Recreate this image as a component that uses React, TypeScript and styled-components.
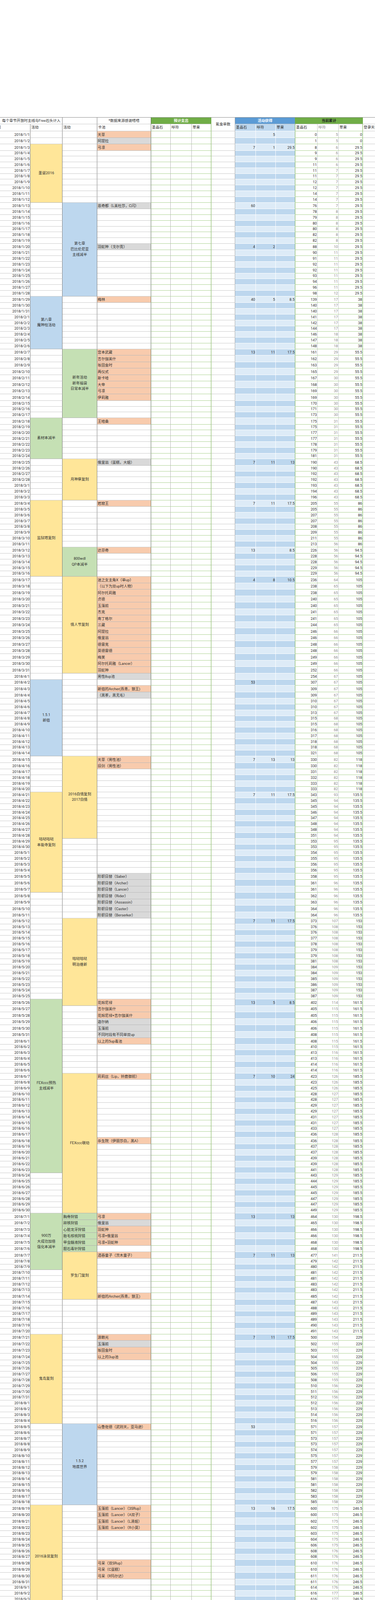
import React from 'react';
import styled, { createGlobalStyle } from 'styled-components';

type Triple = [number, number, number];
type Tone = 'yellow' | 'blue' | 'steel' | 'green' | 'lime' | 'orange';
type PoolTone = 'o' | 'g' | 'b' | 'v';

const TONE: Record<Tone, string> = {
  yellow: '#ffe699',
  blue: '#bdd7ee',
  steel: '#b4c7e7',
  green: '#c5e0b4',
  lime: '#a9d18e',
  orange: '#f4b183',
};

const POOL_TONE: Record<PoolTone, string> = {
  o: '#f8cbad',
  g: '#d9d9d9',
  b: '#9dc3e6',
  v: '#c5e0b4',
};

// visible widths: column A is partly scrolled off the left edge
const COLS = [97, 82, 89, 138, 50, 54, 50, 61, 53, 51, 50, 57, 54, 62, 70];

interface Block {
  from: string;
  to: string;
  label: string;
  tone: Tone;
  left?: boolean;
}

const EVENTS_A: Block[] = [
  { from: '2018/1/3', to: '2018/1/12', label: '圣诞2016', tone: 'yellow' },
  { from: '2018/1/29', to: '2018/2/6', label: '第八章\n魔神柱活动', tone: 'blue' },
  { from: '2018/2/18', to: '2018/2/24', label: '素材本减半', tone: 'green' },
  { from: '2018/3/4', to: '2018/3/16', label: '监狱塔复刻', tone: 'yellow' },
  { from: '2018/4/2', to: '2018/4/14', label: '1.5.1\n新宿', tone: 'blue' },
  { from: '2018/4/21', to: '2018/5/7', label: '咕哒咕哒\n本能寺复刻', tone: 'yellow' },
  { from: '2018/5/26', to: '2018/6/23', label: 'FEXccc预热\n主线减半', tone: 'green' },
  { from: '2018/7/1', to: '2018/7/9', label: '900万\n大成功加倍\n强化本减半', tone: 'green' },
  { from: '2018/7/21', to: '2018/8/4', label: '鬼岛复刻', tone: 'yellow' },
  { from: '2018/8/19', to: '2018/9/4', label: '2016泳装复刻', tone: 'yellow' },
  { from: '2018/9/16', to: '2018/10/8', label: '泳装2017', tone: 'yellow' },
  { from: '2018/10/13', to: '2018/10/27', label: '尼禄祭2017\n无限池', tone: 'orange' },
  { from: '2018/11/3', to: '2018/11/17', label: '万圣2016复刻', tone: 'yellow' },
  { from: '2018/12/1', to: '2018/12/15', label: '万圣2017', tone: 'yellow' },
  { from: '2018/12/29', to: '2019/1/5', label: '1100万DL\n主线1/4', tone: 'green' },
  { from: '2019/1/21', to: '2019/1/31', label: '圣诞2017\n无限池', tone: 'orange' },
  { from: '2019/2/7', to: '2019/2/14', label: '新年活动\n种火本减半', tone: 'lime' },
];

const EVENTS_C: Block[] = [
  { from: '2018/1/13', to: '2018/1/28', label: '第七章\n巴比伦尼亚\n主线减半', tone: 'blue' },
  { from: '2018/2/7', to: '2018/2/17', label: '新年活动\n新年福袋\n日常本减半', tone: 'green' },
  { from: '2018/2/25', to: '2018/3/3', label: '月神祭复刻', tone: 'yellow' },
  { from: '2018/3/12', to: '2018/3/16', label: '800wdl\nQP本减半', tone: 'green' },
  { from: '2018/3/17', to: '2018/3/31', label: '情人节复刻', tone: 'yellow' },
  { from: '2018/4/15', to: '2018/4/28', label: '2016白情复刻\n2017白情', tone: 'yellow' },
  { from: '2018/5/12', to: '2018/5/26', label: '咕哒咕哒\n明治维新', tone: 'yellow' },
  { from: '2018/6/7', to: '2018/6/30', label: 'FEXccc联动', tone: 'yellow' },
  { from: '2018/7/1', to: '2018/7/1', label: '胸骨狩猎', tone: 'green', left: true },
  { from: '2018/7/2', to: '2018/7/2', label: '蹄铁狩猎', tone: 'green', left: true },
  { from: '2018/7/3', to: '2018/7/3', label: '心脏龙牙狩猎', tone: 'green', left: true },
  { from: '2018/7/4', to: '2018/7/4', label: '胎毛核桃狩猎', tone: 'green', left: true },
  { from: '2018/7/5', to: '2018/7/5', label: '甲虫髓液狩猎', tone: 'green', left: true },
  { from: '2018/7/6', to: '2018/7/6', label: '胆石毒针狩猎', tone: 'green', left: true },
  { from: '2018/7/7', to: '2018/7/14', label: '罗生门复刻', tone: 'yellow' },
  { from: '2018/8/5', to: '2018/8/18', label: '1.5.2\n地底世界', tone: 'blue' },
  { from: '2018/9/5', to: '2018/9/15', label: '二周年\n周年福袋\n全日常副本减半', tone: 'green' },
  { from: '2018/10/6', to: '2018/10/13', label: 'Free减半', tone: 'green' },
  { from: '2018/10/27', to: '2018/11/10', label: '1000万DL\n42选1', tone: 'green' },
  { from: '2018/11/20', to: '2018/12/8', label: '1.5.3\n英灵剑豪', tone: 'steel' },
  { from: '2018/12/22', to: '2018/12/31', label: '圣诞2016复刻\n有限池10池', tone: 'orange' },
  { from: '2019/1/4', to: '2019/1/18', label: '1.5.4\n塞勒姆', tone: 'steel' },
  { from: '2019/2/1', to: '2019/2/6', label: 'FGO2.0', tone: 'blue' },
];

const POOLS: Record<string, [string, PoolTone]> = {
  '2018/1/1': ['天草', 'o'],
  '2018/1/2': ['阿提拉', 'g'],
  '2018/1/3': ['弓凛', 'o'],
  '2018/1/13': ['恩奇都（L美杜莎，C闪）', 'g'],
  '2018/1/20': ['羽蛇神（戈尔贡）', 'g'],
  '2018/1/29': ['梅林', 'o'],
  '2018/2/7': ['宫本武藏', 'o'],
  '2018/2/8': ['吉尔伽美什', 'o'],
  '2018/2/9': ['坂田金时', 'o'],
  '2018/2/10': ['两仪式', 'o'],
  '2018/2/11': ['斯卡哈', 'o'],
  '2018/2/12': ['大帝', 'o'],
  '2018/2/13': ['弓凛', 'o'],
  '2018/2/14': ['伊莉雅', 'o'],
  '2018/2/18': ['王哈桑', 'o'],
  '2018/2/25': ['俄里翁（蛋糕，大姐）', 'g'],
  '2018/3/4': ['岩窟王', 'o'],
  '2018/3/12': ['达芬奇', 'o'],
  '2018/3/17': ['迷之女主角X（单up）', 'o'],
  '2018/3/18': ['（以下为双up时人物）', 'o'],
  '2018/3/19': ['阿尔托莉雅', 'o'],
  '2018/3/20': ['贞德', 'o'],
  '2018/3/21': ['玉藻前', 'o'],
  '2018/3/22': ['杰克', 'o'],
  '2018/3/23': ['南丁格尔', 'o'],
  '2018/3/24': ['三藏', 'o'],
  '2018/3/25': ['阿提拉', 'o'],
  '2018/3/26': ['俄里翁', 'o'],
  '2018/3/27': ['德雷克', 'o'],
  '2018/3/28': ['莫德雷德', 'o'],
  '2018/3/29': ['梅芙', 'o'],
  '2018/3/30': ['阿尔托莉雅（Lancer）', 'o'],
  '2018/3/31': ['羽蛇神', 'o'],
  '2018/4/1': ['男性8up池', 'g'],
  '2018/4/3': ['新宿的Archer(燕青，狼王)', 'o'],
  '2018/4/4': ['（黑茶，黑无毛）', 'g'],
  '2018/4/15': ['天草（男性池）', 'o'],
  '2018/4/16': ['旧剑（男性池）', 'o'],
  '2018/5/5': ['阶职日替（Saber）', 'g'],
  '2018/5/6': ['阶职日替（Archer）', 'g'],
  '2018/5/7': ['阶职日替（Lancer）', 'g'],
  '2018/5/8': ['阶职日替（Rider）', 'g'],
  '2018/5/9': ['阶职日替（Assassin）', 'g'],
  '2018/5/10': ['阶职日替（Caster）', 'g'],
  '2018/5/11': ['阶职日替（Berserker）', 'g'],
  '2018/5/26': ['花嫁尼禄', 'o'],
  '2018/5/27': ['吉尔伽美什', 'o'],
  '2018/5/28': ['花嫁尼禄+吉尔伽美什', 'o'],
  '2018/5/29': ['迦尔纳', 'g'],
  '2018/5/30': ['玉藻前', 'g'],
  '2018/5/31': ['不同时段有不同单双up', 'g'],
  '2018/6/1': ['以上的5up毒池', 'o'],
  '2018/6/7': ['莉莉丝（Lip，铃鹿御前）', 'o'],
  '2018/6/18': ['杀生院（伊丽莎白，黑A）', 'o'],
  '2018/7/1': ['弓凛', 'o'],
  '2018/7/2': ['俄里翁', 'g'],
  '2018/7/3': ['羽蛇神', 'o'],
  '2018/7/4': ['弓凛+俄里翁', 'o'],
  '2018/7/5': ['弓凛+羽蛇神', 'o'],
  '2018/7/7': ['酒吞童子（茨木童子）', 'o'],
  '2018/7/14': ['新宿的Archer(燕青，狼王)', 'o'],
  '2018/7/21': ['源赖光', 'o'],
  '2018/7/22': ['玉藻前', 'g'],
  '2018/7/23': ['坂田金时', 'o'],
  '2018/7/24': ['以上的3up池', 'o'],
  '2018/8/5': ['山鲁佐德（武则天，亚马逊）', 'o'],
  '2018/8/19': ['玉藻前（Lancer）（3SRup）', 'o'],
  '2018/8/20': ['玉藻前（Lancer）（A双子）', 'o'],
  '2018/8/21': ['玉藻前（Lancer）（L清姬）', 'o'],
  '2018/8/22': ['玉藻前（Lancer）（R小莫）', 'o'],
  '2018/8/28': ['弓呆（双SRup）', 'o'],
  '2018/8/29': ['弓呆（C蛋糕）', 'o'],
  '2018/8/30': ['弓呆（R玛尔达）', 'o'],
  '2018/9/5': ['福尔摩斯（单up）', 'o'],
  '2018/9/6': ['福尔摩斯+各主线池', 'o'],
  '2018/9/7': ['福尔摩斯+莫迪亚蒂+山鲁佐德', 'o'],
  '2018/9/8': ['福尔摩斯+达芬奇', 'o'],
  '2018/9/16': ['C尼禄（3SRup）', 'o'],
  '2018/9/17': ['C尼禄（S弗兰）', 'o'],
  '2018/9/18': ['C尼禄（水尼托）', 'o'],
  '2018/9/19': ['C尼禄（B信长）', 'o'],
  '2018/9/23': ['水黑呆（双SRup）', 'o'],
  '2018/9/24': ['水黑呆（A海伦娜）', 'o'],
  '2018/9/25': ['水黑呆（L奶光）', 'o'],
  '2018/9/30': ['梅芙', 'g'],
  '2018/10/1': ['三藏', 'g'],
  '2018/10/2': ['梅芙+三藏', 'g'],
  '2018/10/3': ['共有（爱迪生）', 'g'],
  '2018/10/5': ['伊莉雅', 'o'],
  '2018/10/6': ['阶职日替（Saber）', 'g'],
  '2018/10/7': ['阶职日替（Archer）', 'g'],
  '2018/10/8': ['阶职日替（Lancer）', 'g'],
  '2018/10/9': ['阶职日替（Rider）', 'g'],
  '2018/10/10': ['阶职日替（Assassin）', 'g'],
  '2018/10/11': ['阶职日替（Caster）', 'g'],
  '2018/10/12': ['阶职日替（Berserker）', 'g'],
  '2018/10/14': ['布伦希尔德', 'o'],
  '2018/10/15': ['花嫁尼禄', 'o'],
  '2018/10/16': ['布伦希尔德+花嫁尼禄', 'o'],
  '2018/10/17': ['共有（尼禄）', 'o'],
  '2018/10/20': ['冲田总司', 'o'],
  '2018/10/21': ['土方岁三', 'o'],
  '2018/10/22': ['冲田总司+土方岁三', 'o'],
  '2018/10/23': ['共有（铃鹿御前+玉藻猫）', 'o'],
  '2018/10/27': ['梅林', 'o'],
  '2018/10/28': ['（黑无毛）单up', 'g'],
  '2018/10/29': ['白枪呆', 'g'],
  '2018/10/30': ['梅林（黑无毛）', 'o'],
  '2018/10/31': ['梅林+白枪呆', 'o'],
  '2018/11/1': ['梅林+白枪呆（黑无毛）', 'o'],
  '2018/11/3': ['艳后（L大公）', 'o'],
  '2018/11/4': ['艳后（尼托）', 'o'],
  '2018/11/5': ['艳后（茨木童子）', 'o'],
  '2018/11/6': ['艳后（3SR）', 'o'],
  '2018/11/8': ['达芬奇+小莫+拉尔（剑兰）', 'o'],
  '2018/11/9': ['达芬奇+小莫+拉尔（高文）', 'o'],
  '2018/11/10': ['达芬奇+小莫+拉尔（特里斯\n坦）', 'o'],
  '2018/11/11': ['达芬奇+小莫+拉尔（3SR）', 'o'],
  '2018/11/12': ['达芬奇（3SR）', 'o'],
  '2018/11/13': ['小莫（3SR）', 'g'],
  '2018/11/15': ['阿尔托莉雅（雪山樱）', 'g'],
  '2018/11/16': ['阿尔托莉雅（雪山樱+红茶）', 'g'],
  '2018/11/17': ['阿尔托莉雅（雪山樱+B叔）', 'g'],
  '2018/11/18': ['阿尔托莉雅（雪山樱+黑无毛）', 'g'],
  '2018/11/20': ['武藏（巴御前+千代女）', 'o'],
  '2018/11/21': ['武藏（巴御前）', 'o'],
  '2018/11/22': ['武藏（千代女）', 'o'],
  '2018/11/27': ['酒吞+源赖光（柳生+加藤）', 'o'],
  '2018/11/28': ['源赖光（柳生+加藤）', 'o'],
  '2018/11/29': ['酒吞（柳生+加藤）', 'o'],
  '2018/11/30': ['酒吞+源赖光（加藤）', 'o'],
  '2018/12/1': ['酒吞+源赖光（柳生）', 'o'],
  '2018/12/3': ['刑部姬（大龙娘）', 'g'],
  '2018/12/4': ['刑部姬（L龙娘）', 'g'],
  '2018/12/5': ['刑部姬（燕青）', 'g'],
  '2018/12/6': ['刑部姬（武则天）', 'g'],
  '2018/12/7': ['刑部姬（亚马逊）', 'g'],
  '2018/12/8': ['刑部姬（以上5只除大龙娘）', 'g'],
  '2018/12/11': ['拉二+三藏（切嗣）', 'g'],
  '2018/12/12': ['拉二（切嗣）', 'g'],
  '2018/12/13': ['三藏（切嗣）', 'g'],
  '2018/12/15': ['天草四郎', 'o'],
  '2018/12/16': ['贞德', 'g'],
  '2018/12/17': ['杰克', 'g'],
  '2018/12/18': ['大公', 'g'],
  '2018/12/19': ['迦尔纳', 'g'],
  '2018/12/20': ['莫德雷德', 'g'],
  '2018/12/21': ['以上共有（阿斯托尔福）', 'g'],
  '2018/12/23': ['弓凛（红茶）', 'o'],
  '2018/12/24': ['弓凛（R玛尔达）', 'o'],
  '2018/12/25': ['弓凛（童谣）', 'o'],
  '2018/12/26': ['弓凛（3SR）', 'o'],
  '2018/12/29': ['王哈桑', 'o'],
  '2019/1/4': ['（哪吒+喀尔克）', 'b'],
  '2019/1/5': ['（哪吒）', 'b'],
  '2019/1/6': ['（喀尔克）', 'b'],
  '2019/1/7': ['[学妹VR礼装池]', 'v'],
  '2019/1/12': ['阿比盖尔（示巴女王）', 'o'],
  '2019/1/21': ['艾蕾（C闪，L美杜莎）', 'o'],
  '2019/1/22': ['阿提拉（C闪，L美杜莎）', 'o'],
  '2019/1/23': ['艾蕾+阿提拉（C闪，L美杜莎）', 'o'],
  '2019/2/7': ['葛饰北斋', 'o'],
  '2019/2/8': ['吉尔伽美什', 'o'],
  '2019/2/9': ['斯卡哈', 'o'],
  '2019/2/10': ['新宿的Archer', 'o'],
  '2019/2/11': ['溶解莉莉丝', 'o'],
  '2019/2/12': ['以上5位混合池', 'o'],
  '2019/2/13': ['玉藻前', 'g'],
  '2019/2/14': ['宫本武藏', 'o'],
};

// rough weights of what each event hands out; scaled to the sheet totals below
const EVENT_GAINS: [string, number, number, number][] = [
  ['2018/1/13', 45, 0, 0],
  ['2018/1/20', 3, 2, 0],
  ['2018/1/29', 30, 5, 10],
  ['2018/2/7', 10, 10, 20],
  ['2018/2/25', 5, 10, 15],
  ['2018/3/4', 5, 10, 20],
  ['2018/3/12', 10, 0, 10],
  ['2018/3/17', 3, 8, 12],
  ['2018/4/2', 40, 0, 0],
  ['2018/4/15', 5, 12, 15],
  ['2018/4/21', 5, 10, 20],
  ['2018/5/12', 5, 10, 20],
  ['2018/5/26', 10, 5, 10],
  ['2018/6/7', 5, 15, 25],
  ['2018/7/1', 10, 0, 15],
  ['2018/7/7', 5, 10, 15],
  ['2018/7/21', 5, 10, 20],
  ['2018/8/5', 40, 0, 0],
  ['2018/8/19', 10, 15, 20],
  ['2018/9/5', 30, 10, 20],
  ['2018/9/16', 10, 15, 20],
  ['2018/10/13', 5, 10, 15],
  ['2018/10/27', 10, 0, 15],
  ['2018/11/3', 5, 10, 15],
  ['2018/11/20', 40, 0, 0],
  ['2018/12/1', 5, 10, 15],
  ['2018/12/22', 5, 10, 15],
  ['2018/12/29', 10, 0, 10],
  ['2019/1/4', 40, 0, 0],
  ['2019/1/21', 5, 10, 10],
  ['2019/2/1', 30, 0, 0],
];

const FIXED_ACT: Record<string, Triple> = {
  '2018/1/1': [0, 5, 0],
  '2018/1/3': [7, 1, 29.5],
  '2019/2/7': [18, 19, 0],
  '2019/2/8': [0, 1, 18],
  '2019/2/9': [0, 1, 0],
};

const HEAD_TOTALS: Triple[] = [
  [0, 5, 0], [1, 5, 0], [8, 6, 29.5], [9, 6, 29.5], [9, 6, 29.5],
  [11, 6, 29.5], [11, 7, 29.5], [11, 7, 29.5], [12, 7, 29.5],
];

const TAIL_TOTALS: Triple[] = [
  [1053, 281, 363.5], [1072, 300, 363.5], [1072, 301, 381.5], [1074, 302, 381.5],
  [1076, 303, 381.5], [1076, 303, 381.5], [1077, 303, 381.5], [1077, 303, 381.5],
  [1078, 303, 381.5], [1078, 303, 381.5], [1080, 303, 381.5], [1082, 304, 381.5],
];

const DAY_MS = 86400000;
const START = Date.UTC(2018, 0, 1);
const DAYS = Array.from({ length: 413 }, (_, i) => {
  const d = new Date(START + i * DAY_MS);
  return { key: `${d.getUTCFullYear()}/${d.getUTCMonth() + 1}/${d.getUTCDate()}`, dow: d.getUTCDay() };
});
const INDEX = new Map(DAYS.map((d, i) => [d.key, i]));

const scaleTo = (vals: number[], target: number, step: number) => {
  const sum = vals.reduce((a, b) => a + b, 0);
  const out = vals.map(v => Math.round((v * target) / sum / step) * step);
  const diff = target - out.reduce((a, b) => a + b, 0);
  out[out.indexOf(Math.max(...out))] += diff;
  return out;
};

function buildNumbers() {
  const acts: Triple[] = DAYS.map(d => FIXED_ACT[d.key] ?? [0, 0, 0]);
  const stones = scaleTo(EVENT_GAINS.map(e => e[1]), 595, 1);
  const tickets = scaleTo(EVENT_GAINS.map(e => e[2]), 218, 1);
  const apples = scaleTo(EVENT_GAINS.map(e => e[3]), 334, 0.5);
  EVENT_GAINS.forEach((e, k) => {
    acts[INDEX.get(e[0])!] = [stones[k], tickets[k], apples[k]];
  });

  const first = 9;
  const last = 401;
  const span = last - first + 1;
  const weekly = [2, 0, 1, 0, 1, 0, 2];
  const login: Triple[] = DAYS.map(() => [0, 0, 0]);
  let base = 0;
  let sundays = 0;
  for (let i = first; i <= last; i++) {
    login[i][0] = weekly[DAYS[i].dow];
    base += login[i][0];
    if (DAYS[i].dow === 0) {
      login[i][1] = 1;
      sundays++;
    }
  }
  const extra = 1041 - 595 - base;
  for (let n = 0; n < extra; n++) login[first + Math.floor(((n + 0.5) * span) / extra)][0] += 1;
  login[last - 3][1] += 274 - 218 - sundays;

  const totals: Triple[] = DAYS.map(() => [0, 0, 0]);
  HEAD_TOTALS.forEach((t, i) => (totals[i] = t));
  for (let i = first; i <= last; i++) {
    const p = totals[i - 1];
    totals[i] = [p[0] + acts[i][0] + login[i][0], p[1] + acts[i][1] + login[i][1], p[2] + acts[i][2]];
  }
  TAIL_TOTALS.forEach((t, k) => (totals[last + k] = t));
  return { acts, totals };
}

const { acts: ACTS, totals: TOTALS } = buildNumbers();

function spansOf(blocks: Block[]) {
  const starts = new Map<number, Block & { span: number }>();
  const covered = new Set<number>();
  blocks.forEach(b => {
    const s = INDEX.get(b.from)!;
    const e = INDEX.get(b.to)!;
    starts.set(s, { ...b, span: e - s + 1 });
    for (let k = s + 1; k <= e; k++) covered.add(k);
  });
  return { starts, covered };
}

const SPANS_A = spansOf(EVENTS_A);
const SPANS_C = spansOf(EVENTS_C);

const rowHeight = (i: number) => {
  const key = DAYS[i].key;
  if (key === '2018/11/10') return 31;
  const single = SPANS_C.starts.get(i);
  return POOLS[key] || (single && single.left) ? 16.5 : 14.8;
};

const fmt = (n: number) => (n ? String(n) : '');

const GlobalStyle = createGlobalStyle`
  html, body {
    margin: 0;
    padding: 0;
    background: #ffffff;
  }
  body {
    overflow-x: hidden;
  }
`;

const Page = styled.div`
  width: 960px;
  padding-top: 300px;
  overflow: hidden;
  font-family: Roboto, "Noto Sans CJK SC", "Noto Sans", sans-serif;
`;

const Sheet = styled.table`
  border-collapse: separate;
  border-spacing: 0;
  table-layout: fixed;
  width: 1018px;
  margin-left: -19px;
  font-size: 9.4px;
  color: #2e2e2e;
`;

const Col = styled.col<{ $w: number }>`
  width: ${p => p.$w}px;
`;

const Row = styled.tr<{ $h: number }>`
  height: ${p => p.$h}px;
`;

const Cell = styled.td`
  padding: 0 2px 1px;
  border-right: 1px solid #a8a8a8;
  border-bottom: 1px solid #c8c8c8;
  white-space: nowrap;
  overflow: hidden;
  vertical-align: bottom;
  line-height: 12px;
  text-align: left;
`;

const HeadCell = styled(Cell)<{ $bg?: string; $fg?: string; $align?: string; $bold?: boolean; $edge?: string }>`
  border-top: 1px solid #8a8a8a;
  background: ${p => p.$bg ?? '#ffffff'};
  color: ${p => p.$fg ?? '#2e2e2e'};
  text-align: ${p => p.$align ?? 'left'};
  font-weight: ${p => (p.$bold ? 700 : 400)};
  vertical-align: middle;
  ${p => (p.$edge ? `border-right-color: ${p.$edge};` : '')}
`;

const SubHead = styled(Cell)<{ $bg?: string; $fg?: string; $edge?: string; $line?: string }>`
  background: ${p => p.$bg ?? '#ffffff'};
  color: ${p => p.$fg ?? '#2e2e2e'};
  vertical-align: middle;
  ${p => (p.$edge ? `border-right-color: ${p.$edge};` : '')}
  ${p => (p.$line ? `border-bottom-color: ${p.$line};` : '')}
`;

const DateCell = styled(Cell)`
  text-align: right;
  padding-right: 1px;
  border-right-color: #7a7a7a;
`;

const EdgeCell = styled(Cell)`
  border-right-color: #7a7a7a;
`;

const EventCell = styled(Cell)<{ $bg: string; $left?: boolean }>`
  background: ${p => p.$bg};
  border-right-color: #7a7a7a;
  border-bottom-color: #b0b0b0;
  text-align: ${p => (p.$left ? 'left' : 'center')};
  vertical-align: ${p => (p.$left ? 'bottom' : 'middle')};
  white-space: pre-line;
  line-height: ${p => (p.$left ? '12px' : '14.5px')};
`;

const PoolCell = styled(Cell)<{ $bg?: string }>`
  background: ${p => p.$bg ?? '#ffffff'};
  border-right-color: #5d6b56;
  border-bottom-color: ${p => (p.$bg ? '#b9b9b9' : '#c8c8c8')};
  padding-left: 1px;
  white-space: pre;
`;

const SpendCell = styled(Cell)<{ $edge?: boolean }>`
  border-bottom-color: #a9d18e;
  border-right-color: ${p => (p.$edge ? '#70ad47' : '#b5b5b5')};
`;

const PayCell = styled(Cell)`
  border-right-color: #a8a8a8;
`;

const GainCell = styled(Cell)<{ $dark: boolean; $edge?: boolean }>`
  background: ${p => (p.$dark ? '#bdd7ee' : '#ddebf7')};
  border-right-color: ${p => (p.$edge ? '#70ad47' : '#ffffff')};
  border-bottom-color: #ffffff;
  text-align: right;
  padding-right: 1px;
`;

const TotalCell = styled(Cell)<{ $muted?: boolean; $edge?: boolean }>`
  border-bottom-color: #a9d18e;
  border-right-color: ${p => (p.$edge ? '#70ad47' : '#c4c4c4')};
  color: ${p => (p.$muted ? '#8a8a8a' : '#2e2e2e')};
  text-align: right;
  padding-right: 1px;
`;

const FootCell = styled(Cell)<{ $align?: string; $mid?: boolean }>`
  text-align: ${p => p.$align ?? 'left'};
  vertical-align: ${p => (p.$mid ? 'middle' : 'bottom')};
  border-bottom-color: #a8a8a8;
`;

const FootEdge = styled(FootCell)<{ $pad?: number }>`
  border-right-color: #7a7a7a;
  padding-left: ${p => p.$pad ?? 2}px;
`;

function BodyRow({ i }: { i: number }) {
  const day = DAYS[i];
  const pool = POOLS[day.key];
  const a = SPANS_A.starts.get(i);
  const c = SPANS_C.starts.get(i);
  const act = ACTS[i];
  const tot = TOTALS[i];
  const dark = i % 2 === 1;
  return (
    <Row $h={rowHeight(i)}>
      <DateCell>{day.key}</DateCell>
      {a ? (
        <EventCell rowSpan={a.span} $bg={TONE[a.tone]}>
          {a.label}
        </EventCell>
      ) : SPANS_A.covered.has(i) ? null : (
        <EdgeCell />
      )}
      {c ? (
        <EventCell rowSpan={c.span} $bg={TONE[c.tone]} $left={c.left}>
          {c.label}
        </EventCell>
      ) : SPANS_C.covered.has(i) ? null : (
        <EdgeCell />
      )}
      <PoolCell $bg={pool ? POOL_TONE[pool[1]] : undefined}>{pool ? pool[0] : ''}</PoolCell>
      <SpendCell />
      <SpendCell />
      <SpendCell $edge />
      <PayCell />
      <GainCell $dark={dark}>{fmt(act[0])}</GainCell>
      <GainCell $dark={dark}>{fmt(act[1])}</GainCell>
      <GainCell $dark={dark} $edge>
        {fmt(act[2])}
      </GainCell>
      <TotalCell>{tot[0]}</TotalCell>
      <TotalCell $muted>{tot[1]}</TotalCell>
      <TotalCell $edge>{tot[2]}</TotalCell>
      <PayCell />
    </Row>
  );
}

export default function App() {
  return (
    <Page>
      <GlobalStyle />
      <Sheet>
        <colgroup>
          {COLS.map((w, k) => (
            <Col key={k} $w={w} />
          ))}
        </colgroup>
        <tbody>
          <Row $h={18}>
            <HeadCell colSpan={2} $align="right" $edge="#7a7a7a">
              每个章节开放时主线与Free石头计入&nbsp;
            </HeadCell>
            <HeadCell $edge="#7a7a7a" />
            <HeadCell $align="center" $edge="#5d6b56">
              *数据来源感谢嗒嗒
            </HeadCell>
            <HeadCell colSpan={3} $bg="#70ad47" $fg="#ffffff" $align="center" $bold $edge="#70ad47">
              预计支出
            </HeadCell>
            <HeadCell rowSpan={2} $align="center">
              氪金单数
            </HeadCell>
            <HeadCell colSpan={3} $bg="#5b9bd5" $fg="#ffffff" $align="center" $bold $edge="#70ad47">
              活动获得
            </HeadCell>
            <HeadCell colSpan={3} $bg="#70ad47" $fg="#1f1f1f" $align="center" $bold $edge="#70ad47">
              当前累计
            </HeadCell>
            <HeadCell />
          </Row>
          <Row $h={18}>
            <SubHead $edge="#7a7a7a">时间</SubHead>
            <SubHead $edge="#7a7a7a">活动</SubHead>
            <SubHead $edge="#7a7a7a">活动</SubHead>
            <SubHead $edge="#5d6b56">卡池</SubHead>
            <SubHead $line="#a9d18e" $edge="#b5b5b5">圣晶石</SubHead>
            <SubHead $line="#a9d18e" $edge="#b5b5b5">呼符</SubHead>
            <SubHead $line="#a9d18e" $edge="#70ad47">苹果</SubHead>
            <SubHead $bg="#bdd7ee" $line="#ffffff" $edge="#ffffff">圣晶石</SubHead>
            <SubHead $bg="#bdd7ee" $line="#ffffff" $edge="#ffffff">呼符</SubHead>
            <SubHead $bg="#bdd7ee" $line="#ffffff" $edge="#70ad47">苹果</SubHead>
            <SubHead $line="#a9d18e" $edge="#c4c4c4">圣晶石</SubHead>
            <SubHead $line="#a9d18e" $edge="#c4c4c4" $fg="#8a8a8a">呼符</SubHead>
            <SubHead $line="#a9d18e" $edge="#70ad47">苹果</SubHead>
            <SubHead>登录天数</SubHead>
          </Row>
          {DAYS.map((d, i) => (
            <BodyRow key={d.key} i={i} />
          ))}
          <Row $h={17}>
            <FootEdge />
            <FootEdge />
            <FootEdge />
            <FootCell />
            <FootCell />
            <FootCell />
            <FootCell rowSpan={2} $align="center" $mid>
              RMB
            </FootCell>
            <FootCell>合计单数</FootCell>
            <FootCell colSpan={3} $align="center">
              合计活动赠送
            </FootCell>
            <FootCell />
            <FootCell />
            <FootCell />
            <FootCell />
          </Row>
          <Row $h={17}>
            <FootEdge $pad={3}>合计</FootEdge>
            <FootEdge />
            <FootEdge />
            <FootCell />
            <FootCell />
            <FootCell />
            <FootCell $align="right">0</FootCell>
            <FootCell $align="right">620</FootCell>
            <FootCell $align="right">245</FootCell>
            <FootCell $align="right">381.5</FootCell>
            <FootCell />
            <FootCell />
            <FootCell />
            <FootCell />
          </Row>
          <Row $h={17}>
            <FootEdge />
            <FootEdge />
            <FootEdge />
            <FootCell />
            <FootCell />
            <FootCell />
            <FootCell colSpan={2} $align="center">
              ¥ -
            </FootCell>
            <FootCell />
            <FootCell />
            <FootCell />
            <FootCell />
            <FootCell />
            <FootCell />
            <FootCell />
          </Row>
        </tbody>
      </Sheet>
    </Page>
  );
}
